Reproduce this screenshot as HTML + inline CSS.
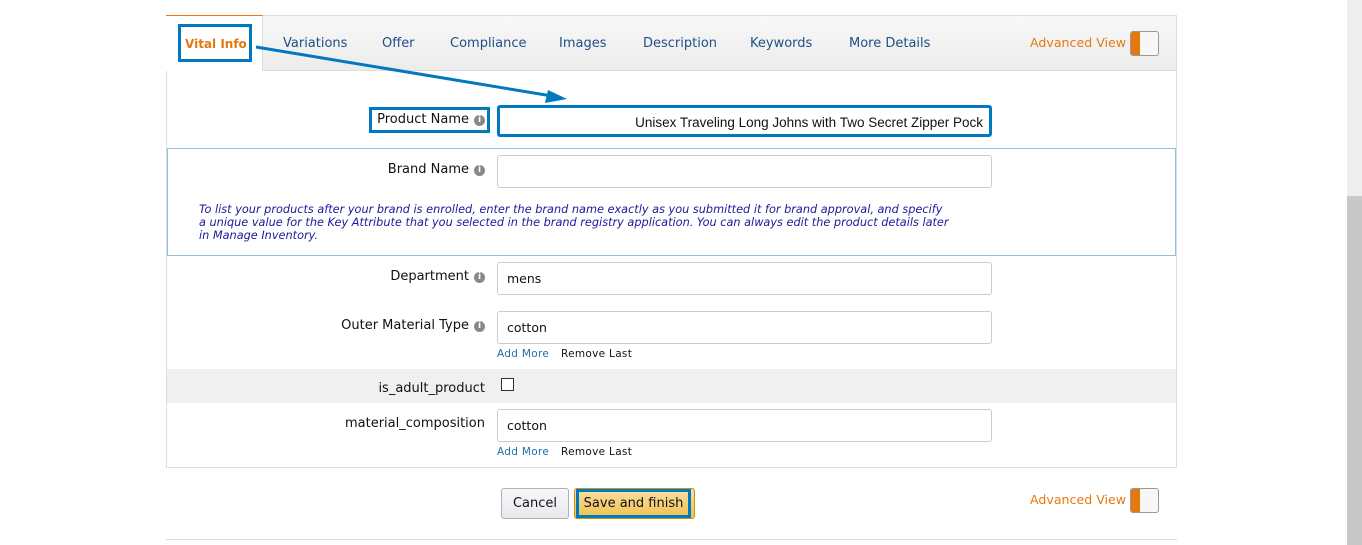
<!DOCTYPE html>
<html><head><style>
body{margin:0;width:1362px;height:545px;background:#fff;font-family:"DejaVu Sans","Liberation Sans",sans-serif;position:relative;overflow:hidden}
.a{position:absolute}
.lbl{position:absolute;font-size:13px;color:#111;text-align:right;white-space:nowrap}
.inp{position:absolute;left:497px;width:495px;height:32px;border:1px solid #ccc;border-radius:3px;background:#fff;font-size:12.5px;box-sizing:border-box;padding:8px 9px;color:#111}
.info{display:inline-block;width:11px;height:11px;border-radius:50%;background:#888;color:#fff;font-size:9px;line-height:11px;text-align:center;font-weight:bold;vertical-align:1px;margin-left:5px}
.tab{position:absolute;top:36px;font-size:13px;color:#1f4f85}
.sm{position:absolute;font-size:10.5px;letter-spacing:.3px}
.av{position:absolute;font-size:12.6px;color:#e47911}
.tg{position:absolute;width:29px;height:25px;border:1px solid #999;border-radius:3px;background:#f7f7f7;box-sizing:border-box;overflow:hidden}
.tg:before{content:"";position:absolute;left:0;top:0;width:9px;height:25px;background:#e47911}
</style></head><body>
<div class="a" style="left:1347px;top:0;width:15px;height:545px;background:#eee"></div>
<div class="a" style="left:1347px;top:196px;width:15px;height:349px;background:#c8c8c8"></div>

<div class="a" style="left:166px;top:15px;width:1011px;height:453px;border:1px solid #ddd;box-sizing:border-box"></div>
<div class="a" style="left:167px;top:16px;width:1009px;height:54px;background:linear-gradient(#f8f8f8,#ececec);border-bottom:1px solid #ddd"></div>
<div class="a" style="left:166px;top:15px;width:97px;height:56px;background:#fff;border-top:1px solid #e47911;border-right:1px solid #ddd;box-sizing:border-box"></div>
<div class="a" style="left:178px;top:24px;width:74px;height:38px;border:3px solid #0079c1;box-sizing:border-box"></div>
<div class="tab" style="left:185px;color:#e47911;font-weight:bold;font-size:12px;top:37px">Vital Info</div>
<div class="tab" style="left:283px">Variations</div>
<div class="tab" style="left:382px">Offer</div>
<div class="tab" style="left:450px">Compliance</div>
<div class="tab" style="left:559px">Images</div>
<div class="tab" style="left:643px">Description</div>
<div class="tab" style="left:750px">Keywords</div>
<div class="tab" style="left:849px">More Details</div>
<div class="av" style="left:1030px;top:35px">Advanced View</div>
<div class="tg" style="left:1130px;top:31px"></div>

<svg class="a" style="left:0;top:0" width="1362" height="545"><line x1="256" y1="47" x2="552" y2="96" stroke="#0079c1" stroke-width="3"/><polygon points="567,99 548,90 545,103" fill="#0079c1"/></svg>

<div class="a" style="left:369px;top:107px;width:121px;height:26px;border:3px solid #0079c1;box-sizing:border-box"></div>
<div class="lbl" style="right:877px;top:112px">Product Name<span class="info">i</span></div>
<div class="inp" style="top:105px;border:3px solid #0079c1;text-align:right;padding:7px 6px;font-family:'Liberation Sans',sans-serif;font-size:13.5px">Unisex Traveling Long Johns with Two Secret Zipper Pock</div>

<div class="a" style="left:167px;top:148px;width:1009px;height:108px;border:1px solid #8fc0dc;box-sizing:border-box"></div>
<div class="lbl" style="right:877px;top:162px">Brand Name<span class="info">i</span></div>
<div class="inp" style="top:155px;height:33px"></div>
<div class="a" style="left:199px;top:203px;font-size:11.3px;font-style:italic;color:#1a1a9a;line-height:13px;width:800px;white-space:nowrap">To list your products after your brand is enrolled, enter the brand name exactly as you submitted it for brand approval, and specify<br>a unique value for the Key Attribute that you selected in the brand registry application. You can always edit the product details later<br>in Manage Inventory.</div>

<div class="lbl" style="right:877px;top:269px">Department<span class="info">i</span></div>
<div class="inp" style="top:262px;height:33px">mens</div>
<div class="lbl" style="right:877px;top:318px">Outer Material Type<span class="info">i</span></div>
<div class="inp" style="top:311px;height:33px">cotton</div>
<div class="sm" style="left:497px;top:348px;color:#1f6fa8">Add More</div>
<div class="sm" style="left:561px;top:348px;color:#111">Remove Last</div>

<div class="a" style="left:167px;top:369px;width:1009px;height:34px;background:#f0f0f0"></div>
<div class="lbl" style="right:877px;top:381px">is_adult_product</div>
<div class="a" style="left:501px;top:378px;width:13px;height:13px;border:1px solid #333;background:#fff;box-sizing:border-box"></div>

<div class="lbl" style="right:877px;top:416px">material_composition</div>
<div class="inp" style="top:409px;height:33px">cotton</div>
<div class="sm" style="left:497px;top:446px;color:#1f6fa8">Add More</div>
<div class="sm" style="left:561px;top:446px;color:#111">Remove Last</div>

<div class="a" style="left:501px;top:488px;width:68px;height:31px;border:1px solid #adb1b8;border-radius:3px;background:linear-gradient(#f7f8fa,#e7e9ec);box-sizing:border-box;font-size:13px;text-align:center;line-height:29px;color:#111">Cancel</div>
<div class="a" style="left:574px;top:488px;width:121px;height:31px;border:1px solid #c89411;border-radius:3px;background:linear-gradient(#f7dfa5,#f0c14b);box-sizing:border-box"></div>
<div class="a" style="left:576px;top:489px;width:115px;height:29px;border:3px solid #0079c1;box-sizing:border-box;font-size:13px;text-align:center;line-height:23px;color:#111">Save and finish</div>
<div class="av" style="left:1030px;top:492px">Advanced View</div>
<div class="tg" style="left:1130px;top:488px"></div>
<div class="a" style="left:166px;top:539px;width:1011px;height:1px;background:#ddd"></div>
</body></html>
